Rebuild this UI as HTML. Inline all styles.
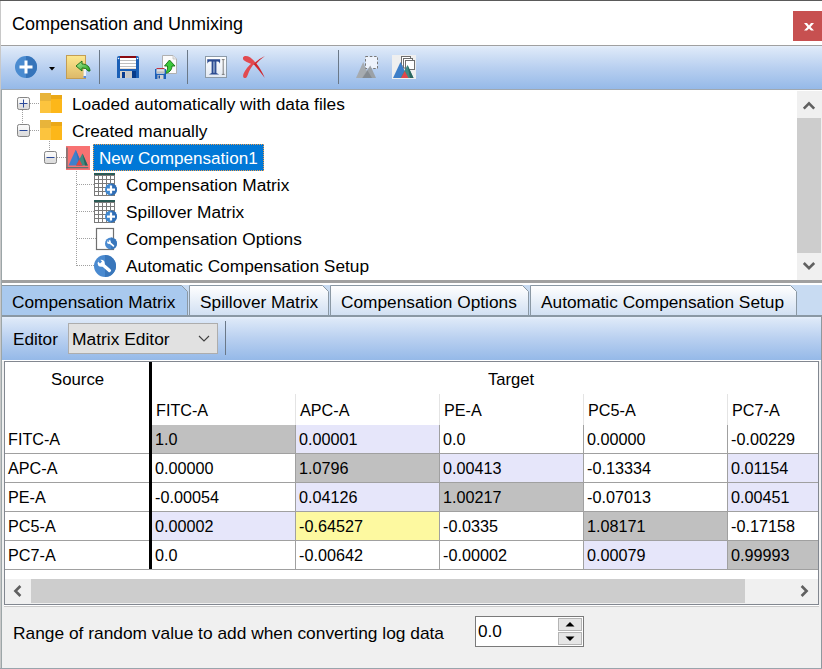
<!DOCTYPE html>
<html><head><meta charset="utf-8">
<style>
*{box-sizing:border-box}
html,body{margin:0;padding:0}
body{width:822px;height:669px;overflow:hidden;position:relative;background:#f0f0f0;font-family:"Liberation Sans",sans-serif;color:#000}
.a{position:absolute}
.t{position:absolute;white-space:pre;transform-origin:0 0}
svg{position:absolute;overflow:visible}
</style></head><body>
<div class="a" style="left:0px;top:0px;width:822px;height:45px;background:#fff;"></div>
<div class="t" style="left:12px;top:15.46px;font-size:18px;line-height:18px">Compensation and Unmixing</div>
<div class="a" style="left:793px;top:11px;width:29px;height:30px;background:#c75050;"></div>
<svg style="left:803.5px;top:22.6px" width="10" height="8" viewBox="0 0 10 8"><path d="M0 0 H3 L5 2.4 L7 0 H10 L6.6 4 L10 7.6 H7 L5 5.4 L3 7.6 H0 L3.4 4 Z" fill="#fff"/></svg>
<div class="a" style="left:0px;top:45px;width:822px;height:1px;background:#a0a0a0;"></div>
<div class="a" style="left:0px;top:46px;width:822px;height:43px;background:linear-gradient(#e6effb,#dce8f8 6%,#b9d0f0 50%,#95b9e8);"></div>
<div class="a" style="left:0px;top:89px;width:822px;height:1px;background:#a0a8b0;"></div>
<div class="a" style="left:99px;top:50px;width:1px;height:34px;background:#6a7888;"></div>
<div class="a" style="left:187px;top:50px;width:1px;height:34px;background:#6a7888;"></div>
<div class="a" style="left:338px;top:50px;width:1px;height:34px;background:#6a7888;"></div>
<svg style="left:14px;top:55px" width="24" height="24" viewBox="0 0 24 24">
<defs><clipPath id="cr"><rect x="12" y="0" width="12" height="24"/></clipPath></defs>
<circle cx="12" cy="12" r="11" fill="#4a8bd0"/>
<circle cx="12" cy="12" r="11" fill="#3674ba" clip-path="url(#cr)"/>
<path d="M12 5.5 V18.5 M5.5 12 H18.5" stroke="#fff" stroke-width="3"/>
</svg>
<svg style="left:48px;top:66px" width="8" height="5" viewBox="0 0 8 5"><path d="M1 1 H7 L4 4.5 Z" fill="#000"/></svg>
<svg style="left:62px;top:52px" width="30" height="30" viewBox="0 0 30 30">
<defs><linearGradient id="fg" x1="0" y1="0" x2="0" y2="1"><stop offset="0" stop-color="#fde88e"/><stop offset="1" stop-color="#dcb869"/></linearGradient>
<linearGradient id="ga" x1="0" y1="0" x2="1" y2="1"><stop offset="0" stop-color="#b4f0a0"/><stop offset="1" stop-color="#1ea020"/></linearGradient></defs>
<rect x="4.5" y="3.5" width="19" height="23" fill="url(#fg)" stroke="#c29d55" stroke-width="1"/>
<rect x="21" y="15" width="2.5" height="11" fill="#c9a458" opacity="0.5"/>
<path d="M14 14 L20 9 L20 12 C25 12 28 15 28 19 L26 19 C25 17 23 16 20 16 L20 19 Z" fill="url(#ga)" stroke="#136b10" stroke-width="0.9"/>
<rect x="21.5" y="17" width="2.5" height="9" fill="#f4f4f4"/>
<rect x="21.5" y="24" width="2.5" height="2" fill="#5a8ad8"/>
</svg>
<svg style="left:114px;top:52px" width="28" height="30" viewBox="0 0 28 30">
<path d="M3 6 Q3 4 5 4 H23 Q25 4 25 6 V26 H3 Z" fill="#1a5fb6"/>
<rect x="6" y="4" width="16" height="2" fill="#8a0a10"/>
<rect x="6" y="6" width="16" height="11" fill="#fff"/>
<rect x="6" y="8" width="16" height="0.9" fill="#b8b8b8"/>
<rect x="6" y="11" width="16" height="0.9" fill="#b8b8b8"/>
<rect x="6" y="14" width="16" height="0.9" fill="#b8b8b8"/>
<rect x="6" y="16.3" width="16" height="0.7" fill="#e0d0c0"/>
<rect x="6" y="19" width="12" height="7" fill="#d8d2ca"/>
<rect x="8" y="20" width="3" height="6" fill="#0a3c90"/>
<rect x="12" y="19" width="6" height="7" fill="#c8c8c8"/>
<rect x="18" y="19" width="4" height="7" fill="#063a8a"/>
<circle cx="4.5" cy="6.5" r="0.8" fill="#fff"/><circle cx="23.5" cy="6.5" r="0.8" fill="#fff"/>
</svg>
<svg style="left:152px;top:52px" width="28" height="30" viewBox="0 0 28 30">
<path d="M10.5 3.5 H21 L24.5 7 V21.5 H10.5 Z" fill="#fbfbfb" stroke="#b0b0b0" stroke-width="1"/>
<path d="M21 3.5 V7 H24.5" fill="#e8e8e8" stroke="#c0c0c0" stroke-width="0.8"/>
<path d="M17.5 8 L23 14 L20 14 C20 18 17 21 13 21.5 C15 19 16 17 15.5 14 L12.5 14 Z" fill="#3cc83c" stroke="#127012" stroke-width="0.9"/>
<path d="M3 17 H14 V27 H3 Z" fill="#1e60b8"/>
<rect x="4.5" y="16" width="8" height="1.2" fill="#c03040"/>
<rect x="4.5" y="17.2" width="8" height="4.5" fill="#eee"/>
<rect x="4.5" y="18.8" width="8" height="0.7" fill="#aaa"/>
<rect x="4.5" y="20.3" width="8" height="0.7" fill="#aaa"/>
<rect x="5.5" y="23" width="6" height="4" fill="#d0d0d0"/>
<rect x="6.5" y="23.5" width="1.5" height="3" fill="#1e50a0"/>
</svg>
<svg style="left:202px;top:52px" width="28" height="30" viewBox="0 0 28 30">
<defs><linearGradient id="tb" x1="0" y1="0" x2="0" y2="1"><stop offset="0" stop-color="#ffffff"/><stop offset="1" stop-color="#e2e9f3"/></linearGradient>
<linearGradient id="ts" x1="0" y1="0" x2="1" y2="0"><stop offset="0" stop-color="#2b4a90"/><stop offset="0.45" stop-color="#9fb4d4"/><stop offset="1" stop-color="#3a5a9c"/></linearGradient></defs>
<rect x="3.5" y="4.5" width="21" height="21" fill="url(#tb)" stroke="#8c9aa8" stroke-width="1"/>
<path d="M5.2 7.2 H18.2 L18 11.8 C17.4 10.2 16.6 9.6 15 9.6 H14.4 V21 L17.2 22.6 H6.8 L9.6 21 V9.6 H8.4 C6.8 9.6 6 10.2 5.4 11.8 Z" fill="#2b4a90"/>
<rect x="10.6" y="9.6" width="2.8" height="11.2" fill="url(#ts)"/>
<path d="M19.8 7.6 H22.6 M21.2 7.6 V22.4 M19.8 22.4 H22.6" stroke="#707070" stroke-width="0.9" fill="none"/>
</svg>
<svg style="left:238px;top:52px" width="32" height="30" viewBox="0 0 32 30">
<path d="M5 5.5 C5.5 3.5 9 3.3 12 5.2 C14 6.6 16 8.6 17.2 10.4 L15.2 13 C12 11.6 8.5 10.2 6.2 8.6 C5.2 7.8 4.8 6.6 5 5.5 Z" fill="#e14a50"/>
<path d="M17.2 10.6 C14.2 13.8 11.6 17.8 9.6 23.2 C8.9 25.4 7.6 26.4 6.3 26 C5 25.5 4.8 24 5.4 22 C7 17.8 10.6 13.4 15.2 10.2 Z" fill="#e14a50"/>
<path d="M27 4 C23.2 5.8 19.6 8.2 16.8 10.8 L15.6 12.3 C19.2 16.2 23.2 21 26.8 26 C24.4 20.4 21.4 15.4 18.4 11.6 C21 8.6 24 6.2 27 4 Z" fill="#d0262c"/>
</svg>
<svg style="left:352px;top:52px" width="30" height="30" viewBox="0 0 30 30">
<path d="M4 26 L11.2 10 L17.5 26 Z" fill="#a6abb0"/>
<rect x="13.5" y="4.5" width="12" height="12" fill="#eef3fc" stroke="#787878" stroke-width="1" stroke-dasharray="2.5 1.8"/>
<path d="M10 26 L18.3 13.5 L24 26 Z" fill="#9ba1a7"/>
<path d="M10.5 26 L15.5 18.5 L20 26 Z" fill="#858b91"/>
</svg>
<svg style="left:389px;top:52px" width="30" height="30" viewBox="0 0 30 30">
<rect x="3" y="3" width="24" height="24" fill="#efefef"/>
<rect x="12.5" y="4.5" width="9" height="9.5" fill="#fff" stroke="#6e6e6e" stroke-width="1"/>
<rect x="14.5" y="6.5" width="9" height="9.5" fill="#fff" stroke="#6e6e6e" stroke-width="1"/>
<rect x="16.5" y="8.5" width="9" height="9" fill="#fff" stroke="#6e6e6e" stroke-width="1"/>
<path d="M4 26 L11.5 10 L19 26 Z" fill="#3d7ec8"/>
<path d="M11.5 26 L18.5 13 L24.5 26 Z" fill="#3e8a82"/>
<path d="M18.5 13 L24.5 26 L21 26 Z" fill="#2b665f"/>
<path d="M12 26 L15.7 19 L19.5 26 Z" fill="#e2464a"/>
</svg>
<div class="a" style="left:1px;top:90px;width:821px;height:190px;background:#fff;"></div>
<div class="a" style="left:797px;top:91px;width:25px;height:189px;background:#f0f0f0;"></div>
<div class="a" style="left:797px;top:118px;width:24px;height:135px;background:#cdcdcd;"></div>
<svg style="left:797px;top:91px" width="24" height="27" viewBox="0 0 24 27"><path d="M6.8 17.6 L12 12.4 L17.2 17.6" stroke="#606060" stroke-width="2.6" fill="none"/></svg>
<svg style="left:797px;top:253px" width="24" height="27" viewBox="0 0 24 27"><path d="M6.8 10 L12 15.2 L17.2 10" stroke="#606060" stroke-width="2.6" fill="none"/></svg>
<div class="a" style="left:30px;top:103px;width:10px;height:1px;background:repeating-linear-gradient(90deg,#a0a0a0 0 1px,transparent 1px 2px)"></div>
<div class="a" style="left:22px;top:110px;width:1px;height:14px;background:repeating-linear-gradient(180deg,#a0a0a0 0 1px,transparent 1px 2px)"></div>
<div class="a" style="left:30px;top:130px;width:10px;height:1px;background:repeating-linear-gradient(90deg,#a0a0a0 0 1px,transparent 1px 2px)"></div>
<div class="a" style="left:49px;top:141px;width:1px;height:10px;background:repeating-linear-gradient(180deg,#a0a0a0 0 1px,transparent 1px 2px)"></div>
<div class="a" style="left:57px;top:157px;width:9px;height:1px;background:repeating-linear-gradient(90deg,#a0a0a0 0 1px,transparent 1px 2px)"></div>
<div class="a" style="left:76px;top:171px;width:1px;height:95px;background:repeating-linear-gradient(180deg,#a0a0a0 0 1px,transparent 1px 2px)"></div>
<div class="a" style="left:77px;top:184px;width:17px;height:1px;background:repeating-linear-gradient(90deg,#a0a0a0 0 1px,transparent 1px 2px)"></div>
<div class="a" style="left:77px;top:211px;width:17px;height:1px;background:repeating-linear-gradient(90deg,#a0a0a0 0 1px,transparent 1px 2px)"></div>
<div class="a" style="left:77px;top:238px;width:19px;height:1px;background:repeating-linear-gradient(90deg,#a0a0a0 0 1px,transparent 1px 2px)"></div>
<div class="a" style="left:77px;top:265px;width:17px;height:1px;background:repeating-linear-gradient(90deg,#a0a0a0 0 1px,transparent 1px 2px)"></div>
<svg style="left:17px;top:97px" width="14" height="14" viewBox="0 0 14 14"><defs><linearGradient id="eg97" x1="0" y1="0" x2="0" y2="1"><stop offset="0" stop-color="#fafafa"/><stop offset="0.45" stop-color="#f4f4f4"/><stop offset="0.55" stop-color="#e2e2e2"/><stop offset="1" stop-color="#dcdcdc"/></linearGradient></defs><rect x="0.5" y="0.5" width="12" height="12" rx="1.8" fill="url(#eg97)" stroke="#858585" stroke-width="1"/><path d="M2.5 6.5 H10.5" stroke="#2b4a9a" stroke-width="1"/><path d="M6.5 2.5 V10.5" stroke="#2b4a9a" stroke-width="1"/></svg>
<svg style="left:17px;top:124px" width="14" height="14" viewBox="0 0 14 14"><defs><linearGradient id="eg124" x1="0" y1="0" x2="0" y2="1"><stop offset="0" stop-color="#fafafa"/><stop offset="0.45" stop-color="#f4f4f4"/><stop offset="0.55" stop-color="#e2e2e2"/><stop offset="1" stop-color="#dcdcdc"/></linearGradient></defs><rect x="0.5" y="0.5" width="12" height="12" rx="1.8" fill="url(#eg124)" stroke="#858585" stroke-width="1"/><path d="M2.5 6.5 H10.5" stroke="#2b4a9a" stroke-width="1"/></svg>
<svg style="left:44px;top:151px" width="14" height="14" viewBox="0 0 14 14"><defs><linearGradient id="eg151" x1="0" y1="0" x2="0" y2="1"><stop offset="0" stop-color="#fafafa"/><stop offset="0.45" stop-color="#f4f4f4"/><stop offset="0.55" stop-color="#e2e2e2"/><stop offset="1" stop-color="#dcdcdc"/></linearGradient></defs><rect x="0.5" y="0.5" width="12" height="12" rx="1.8" fill="url(#eg151)" stroke="#858585" stroke-width="1"/><path d="M2.5 6.5 H10.5" stroke="#2b4a9a" stroke-width="1"/></svg>
<svg style="left:40px;top:93px" width="22" height="20" viewBox="0 0 22 20">
<rect x="0" y="0" width="11" height="8" fill="#e8b43a"/><rect x="0" y="8" width="11" height="12" fill="#fcc43e"/>
<rect x="11" y="2" width="11" height="4" fill="#eba816"/><rect x="11" y="6" width="11" height="14" fill="#fdb719"/>
</svg>
<svg style="left:40px;top:120px" width="22" height="20" viewBox="0 0 22 20">
<rect x="0" y="0" width="11" height="8" fill="#e8b43a"/><rect x="0" y="8" width="11" height="12" fill="#fcc43e"/>
<rect x="11" y="2" width="11" height="4" fill="#eba816"/><rect x="11" y="6" width="11" height="14" fill="#fdb719"/>
</svg>
<svg style="left:63px;top:143px" width="30" height="30" viewBox="0 0 30 30">
<rect x="3" y="3" width="24" height="24" fill="#f87272"/>
<path d="M5.5 22.5 L12.7 6.8 L19.5 22.5 Z" fill="#3f80cc"/>
<path d="M12.7 6.8 L19.5 22.5 L16 22.5 Z" fill="#3470b8"/>
<path d="M13 22.5 L19.5 10.5 L24.8 22.5 Z" fill="#3f8a80"/>
<path d="M19.5 10.5 L24.8 22.5 L22 22.5 Z" fill="#2a635c"/>
<path d="M13 22.5 L16.3 16.2 L19.5 22.5 Z" fill="#e04444"/>
<rect x="3.3" y="4.5" width="1.3" height="21" fill="#5e7474"/>
<rect x="3.3" y="24" width="22" height="1.3" fill="#5e7474"/>
</svg>
<div class="a" style="left:93px;top:144px;width:171px;height:27px;background:#0078d7;outline:1px dotted #f0a050;outline-offset:-1px"></div>
<svg style="left:90px;top:170px" width="30" height="30" viewBox="0 0 30 30"><rect x="4" y="3" width="21" height="2.3" fill="#2a5a55"/><rect x="4" y="5" width="21" height="21" fill="#fff"/><rect x="4" y="5" width="1" height="21" fill="#7a7a7a"/><rect x="4" y="5" width="21" height="1" fill="#7a7a7a"/><rect x="8" y="5" width="1" height="21" fill="#7a7a7a"/><rect x="4" y="9" width="21" height="1" fill="#7a7a7a"/><rect x="12" y="5" width="1" height="21" fill="#7a7a7a"/><rect x="4" y="13" width="21" height="1" fill="#7a7a7a"/><rect x="16" y="5" width="1" height="21" fill="#7a7a7a"/><rect x="4" y="17" width="21" height="1" fill="#7a7a7a"/><rect x="20" y="5" width="1" height="21" fill="#7a7a7a"/><rect x="4" y="21" width="21" height="1" fill="#7a7a7a"/><rect x="24" y="5" width="1" height="21" fill="#7a7a7a"/><rect x="4" y="25" width="21" height="1" fill="#7a7a7a"/><defs><clipPath id="gc170"><rect x="21" y="0" width="10" height="30"/></clipPath></defs><circle cx="21" cy="19.6" r="6" fill="#4088d0"/><circle cx="21" cy="19.6" r="6" fill="#2f6db5" clip-path="url(#gc170)"/><path d="M21 15.6 V23.6 M17 19.6 H25" stroke="#fff" stroke-width="2.2"/></svg>
<svg style="left:90px;top:197px" width="30" height="30" viewBox="0 0 30 30"><rect x="4" y="3" width="21" height="2.3" fill="#2a5a55"/><rect x="4" y="5" width="21" height="21" fill="#fff"/><rect x="4" y="5" width="1" height="21" fill="#7a7a7a"/><rect x="4" y="5" width="21" height="1" fill="#7a7a7a"/><rect x="8" y="5" width="1" height="21" fill="#7a7a7a"/><rect x="4" y="9" width="21" height="1" fill="#7a7a7a"/><rect x="12" y="5" width="1" height="21" fill="#7a7a7a"/><rect x="4" y="13" width="21" height="1" fill="#7a7a7a"/><rect x="16" y="5" width="1" height="21" fill="#7a7a7a"/><rect x="4" y="17" width="21" height="1" fill="#7a7a7a"/><rect x="20" y="5" width="1" height="21" fill="#7a7a7a"/><rect x="4" y="21" width="21" height="1" fill="#7a7a7a"/><rect x="24" y="5" width="1" height="21" fill="#7a7a7a"/><rect x="4" y="25" width="21" height="1" fill="#7a7a7a"/><defs><clipPath id="gc197"><rect x="21" y="0" width="10" height="30"/></clipPath></defs><circle cx="21" cy="19.6" r="6" fill="#4088d0"/><circle cx="21" cy="19.6" r="6" fill="#2f6db5" clip-path="url(#gc197)"/><path d="M21 15.6 V23.6 M17 19.6 H25" stroke="#fff" stroke-width="2.2"/></svg>
<svg style="left:90px;top:224px" width="30" height="30" viewBox="0 0 30 30"><rect x="6.5" y="4.5" width="17" height="21" fill="#fff" stroke="#707070" stroke-width="1.2"/><defs><clipPath id="wc1"><rect x="21" y="12.5" width="7" height="14"/></clipPath></defs><circle cx="21" cy="19.5" r="6" fill="#4a8ad0"/><circle cx="21" cy="19.5" r="6" fill="#3a77bb" clip-path="url(#wc1)"/><path d="M19.04 18.08 L23.40 21.90" stroke="#fff" stroke-width="1.80" stroke-linecap="round"/><circle cx="18.93" cy="17.97" r="1.91" fill="#fff"/><path d="M18.16 15.79 L19.36 16.99 L18.27 18.08 L17.07 16.88 Z" fill="#4a8ad0"/></svg>
<svg style="left:90px;top:251px" width="30" height="30" viewBox="0 0 30 30"><defs><clipPath id="wc2"><rect x="15" y="3" width="12" height="24"/></clipPath></defs><circle cx="15" cy="15" r="11" fill="#4a8ad0"/><circle cx="15" cy="15" r="11" fill="#3a77bb" clip-path="url(#wc2)"/><path d="M11.40 12.40 L19.40 19.40" stroke="#fff" stroke-width="3.30" stroke-linecap="round"/><circle cx="11.20" cy="12.20" r="3.50" fill="#fff"/><path d="M9.80 8.20 L12.00 10.40 L10.00 12.40 L7.80 10.20 Z" fill="#4a8ad0"/></svg>
<div class="t" style="left:72px;top:96.36px;font-size:17.3px;line-height:17.3px">Loaded automatically with data files</div>
<div class="t" style="left:72px;top:123.36px;font-size:17.3px;line-height:17.3px">Created manually</div>
<div class="t" style="left:99px;top:149.52px;font-size:17.1px;line-height:17.1px;color:#fff">New Compensation1</div>
<div class="t" style="left:126px;top:177.36px;font-size:17.3px;line-height:17.3px">Compensation Matrix</div>
<div class="t" style="left:126px;top:204.36px;font-size:17.3px;line-height:17.3px">Spillover Matrix</div>
<div class="t" style="left:126px;top:231.36px;font-size:17.3px;line-height:17.3px">Compensation Options</div>
<div class="t" style="left:126px;top:258.36px;font-size:17.3px;line-height:17.3px">Automatic Compensation Setup</div>
<div class="a" style="left:0px;top:280px;width:822px;height:3px;background:#a0a0a0;"></div>
<div class="a" style="left:1px;top:283px;width:821px;height:2px;background:#ffffff;"></div>
<div class="a" style="left:1px;top:285px;width:821px;height:31px;background:#c8dbf2;"></div>
<svg style="left:1px;top:285px" width="187" height="31" viewBox="0 0 187 31"><defs><linearGradient id="tg1" x1="0" y1="0" x2="0" y2="1"><stop offset="0" stop-color="#ffffff"/><stop offset="1" stop-color="#d0dff2"/></linearGradient></defs><path d="M0.5 31 V0.5 H180.5 L186.5 6.5 V31" fill="#a9c9ee" stroke="#8a98a4" stroke-width="1"/></svg>
<div class="t" style="left:12px;top:294.06px;font-size:17.3px;line-height:17.3px">Compensation Matrix</div>
<svg style="left:189px;top:285px" width="140" height="31" viewBox="0 0 140 31"><defs><linearGradient id="tg189" x1="0" y1="0" x2="0" y2="1"><stop offset="0" stop-color="#ffffff"/><stop offset="1" stop-color="#d0dff2"/></linearGradient></defs><path d="M0.5 31 V0.5 H133.5 L139.5 6.5 V31" fill="url(#tg189)" stroke="#8a98a4" stroke-width="1"/></svg>
<div class="t" style="left:200px;top:294.06px;font-size:17.3px;line-height:17.3px">Spillover Matrix</div>
<svg style="left:330px;top:285px" width="199" height="31" viewBox="0 0 199 31"><defs><linearGradient id="tg330" x1="0" y1="0" x2="0" y2="1"><stop offset="0" stop-color="#ffffff"/><stop offset="1" stop-color="#d0dff2"/></linearGradient></defs><path d="M0.5 31 V0.5 H192.5 L198.5 6.5 V31" fill="url(#tg330)" stroke="#8a98a4" stroke-width="1"/></svg>
<div class="t" style="left:341px;top:294.06px;font-size:17.3px;line-height:17.3px">Compensation Options</div>
<svg style="left:530px;top:285px" width="267" height="31" viewBox="0 0 267 31"><defs><linearGradient id="tg530" x1="0" y1="0" x2="0" y2="1"><stop offset="0" stop-color="#ffffff"/><stop offset="1" stop-color="#d0dff2"/></linearGradient></defs><path d="M0.5 31 V0.5 H260.5 L266.5 6.5 V31" fill="url(#tg530)" stroke="#8a98a4" stroke-width="1"/></svg>
<div class="t" style="left:541px;top:294.06px;font-size:17.3px;line-height:17.3px">Automatic Compensation Setup</div>
<div class="a" style="left:1px;top:315px;width:820px;height:2px;background:#8a98a4;"></div>
<div class="a" style="left:1px;top:317px;width:820px;height:43px;background:linear-gradient(#e6effb,#dce8f8 6%,#b9d0f0 50%,#95b9e8);"></div>
<div class="t" style="left:13px;top:331.14px;font-size:17.2px;line-height:17.2px">Editor</div>
<div class="a" style="left:68px;top:323px;width:150px;height:31px;background:#e1e1e1;border:1px solid #adadad"></div>
<div class="t" style="left:72px;top:330.97px;font-size:17.4px;line-height:17.4px">Matrix Editor</div>
<svg style="left:196px;top:333px" width="16" height="12" viewBox="0 0 16 12"><path d="M3 3 L8 8 L13 3" stroke="#404040" stroke-width="1.1" fill="none"/></svg>
<div class="a" style="left:225px;top:321px;width:1px;height:34px;background:#6a7888;"></div>
<div class="a" style="left:1px;top:360px;width:820px;height:1px;background:#ffffff;"></div>
<div class="a" style="left:4px;top:361px;width:815px;height:244px;background:#fff;border:1px solid #828790"></div>
<div class="t" style="left:51px;top:371.78px;font-size:16.8px;line-height:16.8px">Source</div>
<div class="t" style="left:488px;top:371.95px;font-size:16.6px;line-height:16.6px">Target</div>
<div class="a" style="left:295px;top:394px;width:1px;height:31px;background:#e4e4e4;"></div>
<div class="a" style="left:439px;top:394px;width:1px;height:31px;background:#e4e4e4;"></div>
<div class="a" style="left:583px;top:394px;width:1px;height:31px;background:#e4e4e4;"></div>
<div class="a" style="left:727px;top:394px;width:1px;height:31px;background:#e4e4e4;"></div>
<div class="t" style="left:156px;top:401.89px;font-size:16.2px;line-height:16.2px">FITC-A</div>
<div class="t" style="left:300px;top:401.89px;font-size:16.2px;line-height:16.2px">APC-A</div>
<div class="t" style="left:444px;top:401.89px;font-size:16.2px;line-height:16.2px">PE-A</div>
<div class="t" style="left:588px;top:401.89px;font-size:16.2px;line-height:16.2px">PC5-A</div>
<div class="t" style="left:732px;top:401.89px;font-size:16.2px;line-height:16.2px">PC7-A</div>
<div class="a" style="left:152px;top:425px;width:143px;height:28px;background:#c0c0c0;"></div>
<div class="a" style="left:296px;top:425px;width:143px;height:28px;background:#e6e6fa;"></div>
<div class="a" style="left:5px;top:453px;width:813px;height:1px;background:#a0a0a0;"></div>
<div class="t" style="left:8px;top:430.79px;font-size:16.2px;line-height:16.2px">FITC-A</div>
<div class="t" style="left:155px;top:430.79px;font-size:16.2px;line-height:16.2px">1.0</div>
<div class="t" style="left:299px;top:430.79px;font-size:16.2px;line-height:16.2px">0.00001</div>
<div class="t" style="left:443px;top:430.79px;font-size:16.2px;line-height:16.2px">0.0</div>
<div class="t" style="left:587px;top:430.79px;font-size:16.2px;line-height:16.2px">0.00000</div>
<div class="t" style="left:731px;top:430.79px;font-size:16.2px;line-height:16.2px">-0.00229</div>
<div class="a" style="left:296px;top:454px;width:143px;height:28px;background:#c0c0c0;"></div>
<div class="a" style="left:440px;top:454px;width:143px;height:28px;background:#e6e6fa;"></div>
<div class="a" style="left:728px;top:454px;width:90px;height:28px;background:#e6e6fa;"></div>
<div class="a" style="left:5px;top:482px;width:813px;height:1px;background:#a0a0a0;"></div>
<div class="t" style="left:8px;top:459.79px;font-size:16.2px;line-height:16.2px">APC-A</div>
<div class="t" style="left:155px;top:459.79px;font-size:16.2px;line-height:16.2px">0.00000</div>
<div class="t" style="left:299px;top:459.79px;font-size:16.2px;line-height:16.2px">1.0796</div>
<div class="t" style="left:443px;top:459.79px;font-size:16.2px;line-height:16.2px">0.00413</div>
<div class="t" style="left:587px;top:459.79px;font-size:16.2px;line-height:16.2px">-0.13334</div>
<div class="t" style="left:731px;top:459.79px;font-size:16.2px;line-height:16.2px">0.01154</div>
<div class="a" style="left:296px;top:483px;width:143px;height:28px;background:#e6e6fa;"></div>
<div class="a" style="left:440px;top:483px;width:143px;height:28px;background:#c0c0c0;"></div>
<div class="a" style="left:728px;top:483px;width:90px;height:28px;background:#e6e6fa;"></div>
<div class="a" style="left:5px;top:511px;width:813px;height:1px;background:#a0a0a0;"></div>
<div class="t" style="left:8px;top:488.79px;font-size:16.2px;line-height:16.2px">PE-A</div>
<div class="t" style="left:155px;top:488.79px;font-size:16.2px;line-height:16.2px">-0.00054</div>
<div class="t" style="left:299px;top:488.79px;font-size:16.2px;line-height:16.2px">0.04126</div>
<div class="t" style="left:443px;top:488.79px;font-size:16.2px;line-height:16.2px">1.00217</div>
<div class="t" style="left:587px;top:488.79px;font-size:16.2px;line-height:16.2px">-0.07013</div>
<div class="t" style="left:731px;top:488.79px;font-size:16.2px;line-height:16.2px">0.00451</div>
<div class="a" style="left:152px;top:512px;width:143px;height:28px;background:#e6e6fa;"></div>
<div class="a" style="left:296px;top:512px;width:143px;height:28px;background:#fdf9a0;"></div>
<div class="a" style="left:584px;top:512px;width:143px;height:28px;background:#c0c0c0;"></div>
<div class="a" style="left:5px;top:540px;width:813px;height:1px;background:#a0a0a0;"></div>
<div class="t" style="left:8px;top:517.79px;font-size:16.2px;line-height:16.2px">PC5-A</div>
<div class="t" style="left:155px;top:517.79px;font-size:16.2px;line-height:16.2px">0.00002</div>
<div class="t" style="left:299px;top:517.79px;font-size:16.2px;line-height:16.2px">-0.64527</div>
<div class="t" style="left:443px;top:517.79px;font-size:16.2px;line-height:16.2px">-0.0335</div>
<div class="t" style="left:587px;top:517.79px;font-size:16.2px;line-height:16.2px">1.08171</div>
<div class="t" style="left:731px;top:517.79px;font-size:16.2px;line-height:16.2px">-0.17158</div>
<div class="a" style="left:584px;top:541px;width:143px;height:28px;background:#e6e6fa;"></div>
<div class="a" style="left:728px;top:541px;width:90px;height:28px;background:#c0c0c0;"></div>
<div class="a" style="left:5px;top:569px;width:813px;height:1px;background:#a0a0a0;"></div>
<div class="t" style="left:8px;top:546.79px;font-size:16.2px;line-height:16.2px">PC7-A</div>
<div class="t" style="left:155px;top:546.79px;font-size:16.2px;line-height:16.2px">0.0</div>
<div class="t" style="left:299px;top:546.79px;font-size:16.2px;line-height:16.2px">-0.00642</div>
<div class="t" style="left:443px;top:546.79px;font-size:16.2px;line-height:16.2px">-0.00002</div>
<div class="t" style="left:587px;top:546.79px;font-size:16.2px;line-height:16.2px">0.00079</div>
<div class="t" style="left:731px;top:546.79px;font-size:16.2px;line-height:16.2px">0.99993</div>
<div class="a" style="left:295px;top:425px;width:1px;height:145px;background:#a0a0a0;"></div>
<div class="a" style="left:439px;top:425px;width:1px;height:145px;background:#a0a0a0;"></div>
<div class="a" style="left:583px;top:425px;width:1px;height:145px;background:#a0a0a0;"></div>
<div class="a" style="left:727px;top:425px;width:1px;height:145px;background:#a0a0a0;"></div>
<div class="a" style="left:149px;top:362px;width:3px;height:207px;background:#000;"></div>
<div class="a" style="left:5px;top:579px;width:813px;height:25px;background:#f0f0f0;"></div>
<div class="a" style="left:31px;top:579px;width:714px;height:24px;background:#cdcdcd;"></div>
<svg style="left:5px;top:579px" width="26" height="24" viewBox="0 0 26 24"><path d="M15.4 7 L10.4 12 L15.4 17" stroke="#606060" stroke-width="2.6" fill="none"/></svg>
<svg style="left:792px;top:579px" width="26" height="24" viewBox="0 0 26 24"><path d="M9.6 7 L14.6 12 L9.6 17" stroke="#606060" stroke-width="2.6" fill="none"/></svg>
<div class="a" style="left:4px;top:605px;width:815px;height:1px;background:#ffffff;"></div>
<div class="a" style="left:4px;top:606px;width:815px;height:1px;background:#c8c8c8;"></div>
<div class="t" style="left:13px;top:624.91px;font-size:17.35px;line-height:17.35px">Range of random value to add when converting log data</div>
<div class="a" style="left:475px;top:616px;width:109px;height:31px;background:#fff;border:1px solid #7a7a7a"></div>
<div class="t" style="left:478px;top:623.04px;font-size:17.2px;line-height:17.2px">0.0</div>
<svg style="left:558px;top:618px" width="24" height="13" viewBox="0 0 24 13"><rect x="0.5" y="0.5" width="23" height="12" fill="#e6e6e6" stroke="#b4b4b4"/><path d="M7.5 8.5 H16.5 L12 4 Z" fill="#000"/></svg>
<svg style="left:558px;top:632px" width="24" height="13" viewBox="0 0 24 13"><rect x="0.5" y="0.5" width="23" height="12" fill="#e6e6e6" stroke="#b4b4b4"/><path d="M7.5 4.5 H16.5 L12 9 Z" fill="#000"/></svg>
<div class="a" style="left:0px;top:0px;width:822px;height:1px;background:#5a5a5a;"></div>
<div class="a" style="left:0px;top:1px;width:1px;height:668px;background:#c8c8c8;"></div>
<div class="a" style="left:1px;top:90px;width:1px;height:578px;background:#9ca6a8;"></div>
<div class="a" style="left:821px;top:315px;width:1px;height:354px;background:#8e989e;"></div>
<div class="a" style="left:0px;top:668px;width:822px;height:1px;background:#9aa4ac;"></div>
</body></html>
